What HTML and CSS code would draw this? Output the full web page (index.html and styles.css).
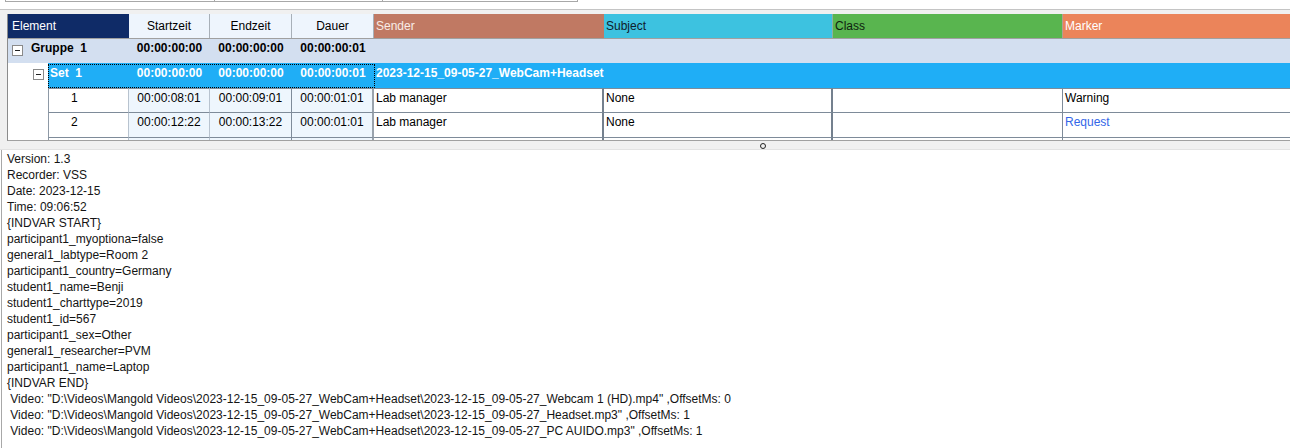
FILE: index.html
```html
<!DOCTYPE html>
<html>
<head>
<meta charset="utf-8">
<link rel="stylesheet" href="styles.css">
</head>
<body>
<div class="top">
  <div class="tabs"><span class="tab t1"></span><span class="tab t2"></span><span class="tab t3"></span></div>
</div>
<div class="panel">
  <div class="grid">
    <div class="row head">
      <div class="c w-el h-el">Element</div>
      <div class="c w-st h-t">Startzeit</div>
      <div class="c w-en h-t">Endzeit</div>
      <div class="c w-du h-t">Dauer</div>
      <div class="c w-se h-se">Sender</div>
      <div class="c w-su h-su">Subject</div>
      <div class="c w-cl h-cl">Class</div>
      <div class="c w-ma h-ma">Marker</div>
    </div>
    <div class="row group">
      <div class="c w-el g-name"><span class="exp"></span><span class="bname">Gruppe  1</span></div>
      <div class="c w-st ctr">00:00:00:00</div>
      <div class="c w-en ctr">00:00:00:00</div>
      <div class="c w-du ctr">00:00:00:01</div>
    </div>
    <div class="row set">
      <div class="indent"><span class="exp"></span></div>
      <div class="setbody">
        <div class="focus">
          <div class="c w-num s-name">Set  1</div>
          <div class="c w-st ctr">00:00:00:00</div>
          <div class="c w-en ctr">00:00:00:00</div>
          <div class="c w-du ctr">00:00:00:01</div>
        </div>
        <div class="c s-title">2023-12-15_09-05-27_WebCam+Headset</div>
      </div>
    </div>
    <div class="rows">
      <div class="row data">
        <div class="indent"></div>
        <div class="c w-num d-num">1</div>
        <div class="c w-st d-t">00:00:08:01</div>
        <div class="c w-en d-t">00:00:09:01</div>
        <div class="c w-du d-t b-dark">00:00:01:01</div>
        <div class="c w-se d-txt">Lab manager</div>
        <div class="c w-su d-txt">None</div>
        <div class="c w-cl d-txt"></div>
        <div class="c w-ma d-txt">Warning</div>
      </div>
      <div class="row data r2">
        <div class="indent"></div>
        <div class="c w-num d-num">2</div>
        <div class="c w-st d-t">00:00:12:22</div>
        <div class="c w-en d-t">00:00:13:22</div>
        <div class="c w-du d-t b-dark">00:00:01:01</div>
        <div class="c w-se d-txt">Lab manager</div>
        <div class="c w-su d-txt">None</div>
        <div class="c w-cl d-txt"></div>
        <div class="c w-ma d-txt link">Request</div>
      </div>
      <div class="row data">
        <div class="indent"></div>
        <div class="c w-num d-num"></div>
        <div class="c w-st d-t"></div>
        <div class="c w-en d-t"></div>
        <div class="c w-du d-t b-dark"></div>
        <div class="c w-se d-txt"></div>
        <div class="c w-su d-txt"></div>
        <div class="c w-cl d-txt"></div>
        <div class="c w-ma d-txt"></div>
      </div>
    </div>
  </div>
  <div class="splitter"><span class="grip"></span></div>
</div>
<div class="log">Version: 1.3
Recorder: VSS
Date: 2023-12-15
Time: 09:06:52
{INDVAR START}
participant1_myoptiona=false
general1_labtype=Room 2
participant1_country=Germany
student1_name=Benji
student1_charttype=2019
student1_id=567
participant1_sex=Other
general1_researcher=PVM
participant1_name=Laptop
{INDVAR END}
 Video: "D:\Videos\Mangold Videos\2023-12-15_09-05-27_WebCam+Headset\2023-12-15_09-05-27_Webcam 1 (HD).mp4" ,OffsetMs: 0
 Video: "D:\Videos\Mangold Videos\2023-12-15_09-05-27_WebCam+Headset\2023-12-15_09-05-27_Headset.mp3" ,OffsetMs: 1
 Video: "D:\Videos\Mangold Videos\2023-12-15_09-05-27_WebCam+Headset\2023-12-15_09-05-27_PC AUIDO.mp3" ,OffsetMs: 1</div>
</body>
</html>
```

FILE: styles.css
```css
* { box-sizing: border-box; }
html, body { margin: 0; padding: 0; background: #fff; overflow: hidden; }
body {
  width: 1290px;
  height: 448px;
  font-family: "Liberation Sans", Arial, sans-serif;
  font-size: 12px;
  color: #000;
}

.top { height: 9px; background: #fff; }
.tabs { display: flex; margin-left: 5px; }
.tab { display: block; height: 2px; border-bottom: 1px solid #a8a8a8; border-right: 1px solid #a8a8a8; }
.t1 { width: 210px; border-left: 1px solid #a8a8a8; }
.t2 { width: 168px; }
.t3 { width: 195px; }

.panel {
  background: #f0f0f0;
  border-top: 1px solid #c4c4c4;
  padding-top: 4px;
}

.grid {
  margin-left: 7px;
  height: 127px;
  background: #fff;
  border-left: 1px solid #8c8c8c;
  border-bottom: 1px solid #a0a0a0;
  overflow: hidden;
}

.row { display: flex; white-space: nowrap; }
.c { flex: none; overflow: hidden; white-space: pre; }

.w-el { width: 121px; }
.w-num { width: 81px; }
.w-st { width: 81px; }
.w-en { width: 82px; }
.w-du { width: 82px; }
.w-se { width: 230px; }
.w-su { width: 229px; }
.w-cl { width: 230px; }
.w-ma { width: 300px; }

.head { height: 25px; border-bottom: 1px solid #a0a0a0; line-height: 24px; }
.h-el { background: #0f2b67; color: #fff; padding-left: 4px; }
.h-t { background: #eef5fd; text-align: center; border-right: 1px solid #a8b0b8; }
.h-se { background: #c07963; color: #f8ece7; padding-left: 2px; }
.h-su { background: #3dc2e0; color: #10202a; padding-left: 2px; border-right: 1px solid #8fb0a0; }
.h-cl { background: #59b54f; color: #0e1e0e; padding-left: 2px; border-right: 1px solid #b0a090; }
.h-ma { background: #eb845a; color: #fff; padding-left: 2px; }

.group { height: 24px; background: #d3dff0; font-weight: bold; line-height: 18px; }
.g-name { display: flex; align-items: flex-start; }
.bname { padding-left: 1px; }
.exp {
  display: block;
  flex: none;
  width: 11px;
  height: 11px;
  border: 1px solid #8a8a8a;
  background: #fff;
  position: relative;
}
.exp::after {
  content: "";
  position: absolute;
  left: 2px;
  top: 4px;
  width: 5px;
  height: 1px;
  background: #222;
}
.group .exp { margin: 6px 7px 0 4px; }
.ctr { text-align: center; }

.set { height: 25px; line-height: 18px; font-weight: bold; }
.indent { width: 40px; flex: none; background: #fff; }
.set .indent { padding: 6px 0 0 25px; }
.setbody { flex: 1; display: flex; background: #1faef6; color: #fff; }
.focus { display: flex; outline: 1px dotted #000; outline-offset: -1px; height: 24px; margin-top: 1px; width: 327px; }
.s-name { padding-left: 2px; }
.s-title { padding-left: 1px; padding-top: 1px; }

.rows { border-top: 1px solid transparent; }
.data { height: 24px; line-height: 18px; }
.data.r2 { height: 25px; }
.data .c { border-bottom: 1px solid #7e8b99; border-right: 1px solid #7e8b99; }
.rows .data:first-child .c { border-top: 1px solid #7e8b99; height: 25px; }
.rows .data:first-child { height: 25px; margin-top: -1px; }
.d-num { border-left: 1px solid #8e99a6; padding-left: 22px; }
.data .d-num, .data .w-st { border-right-color: #b8c3cf; }
.d-t { background: #eef6fd; text-align: center; }
.data .b-dark { border-right: 2px solid #9aa3ad; }
.d-txt { padding-left: 2px; background: #fff; }
.data .w-se, .data .w-su { border-right: 2px solid #74808e; }
.link { color: #3366e8; }

.splitter { height: 9px; display: flex; align-items: center; border-bottom: 1px solid #e2e2e2; }
.grip {
  display: block;
  margin-left: 760px;
  margin-top: 1px;
  width: 6px;
  height: 6px;
  border: 1px solid #222;
  border-radius: 50%;
}

.log {
  margin-left: 1px;
  border-left: 1px solid #a8a8a8;
  padding: 1px 0 0 5px;
  white-space: pre;
  line-height: 16px;
  font-size: 12px;
  color: #141414;
  height: 300px;
}
```
